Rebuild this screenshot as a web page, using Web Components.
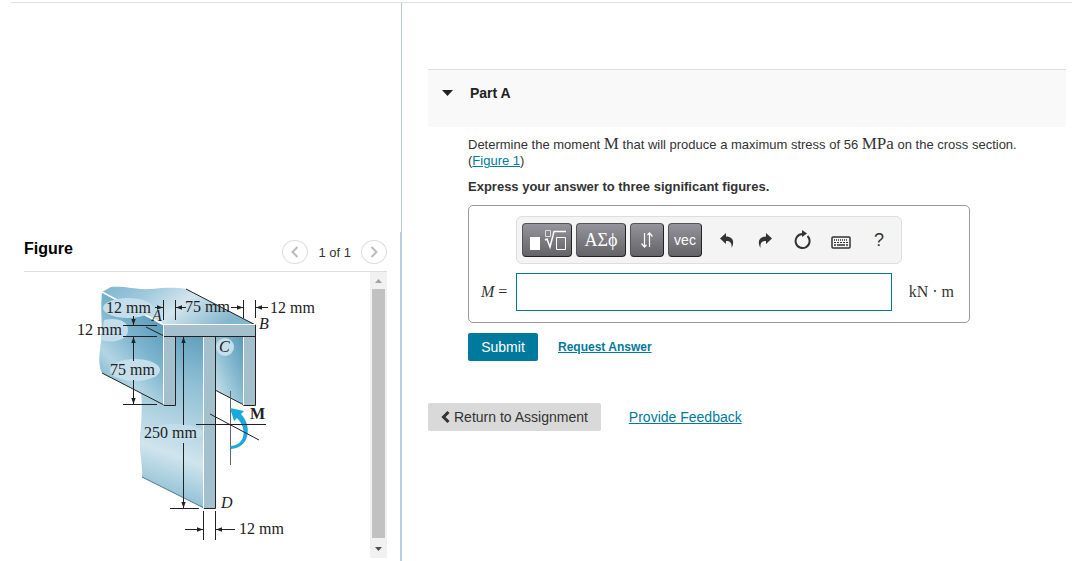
<!DOCTYPE html>
<html lang="en">
<head>
<meta charset="utf-8">
<title>Part A</title>
<style>
  body {
    margin: 0;
    background: #fff;
    color: #333;
    font-family: "Liberation Sans", Arial, sans-serif;
    font-size: 13px;
  }
</style>
</head>
<body>
<assignment-page>
  <figure-panel slot="figure" heading="Figure" count="1 of 1">
    <beam-figure></beam-figure>
  </figure-panel>
  <problem-part heading="Part A">
    <problem-text></problem-text>
    <answer-box></answer-box>
    <answer-actions></answer-actions>
  </problem-part>
  <page-actions></page-actions>
</assignment-page>

<script>
class AssignmentPage extends HTMLElement {
  constructor() {
    super();
    this.attachShadow({ mode: "open" });
  }

  connectedCallback() {
    this.shadowRoot.innerHTML = `
      <style>
        :host { display: block; padding: 2px 0 0 11px; }
        .columns {
          display: grid;
          grid-template-columns: 391px minmax(0, 1fr);
          min-height: calc(100vh - 3px);
          border-top: 1px solid #ddd;
        }
        aside {
          display: flex;
          flex-direction: column;
        }
        .spacer {
          height: 229px;
          border-right: 1px solid #b8c8d8;
        }
        .figure {
          flex: 1;
          padding: 0 13px;
          border-right: 2px solid #b8cce0;
        }
        main { padding: 66px 6px 0 26px; }
      </style>
      <div class="columns">
        <aside>
          <div class="spacer"></div>
          <div class="figure"><slot name="figure"></slot></div>
        </aside>
        <main><slot></slot></main>
      </div>`;
  }
}
customElements.define("assignment-page", AssignmentPage);

class FigurePanel extends HTMLElement {
  constructor() {
    super();
    this.attachShadow({ mode: "open" });
  }

  connectedCallback() {
    this.shadowRoot.innerHTML = `
      <style>
        :host { display: block; }
        header {
          display: flex;
          align-items: center;
          height: 39px;
          border-bottom: 1px solid #ddd;
        }
        h2 {
          flex: 1;
          margin: 0 0 6px;
          font-size: 16px;
          line-height: 18px;
          color: #000;
        }
        nav {
          display: flex;
          align-items: center;
          gap: 10px;
          font-size: 13px;
        }
        nav span { padding-top: 2px; }
        nav button {
          display: grid;
          place-items: center;
          width: 26px;
          height: 24px;
          padding: 0;
          border: 1px solid #ddd;
          border-radius: 50%;
          background: #fff;
        }
        .view { display: flex; }
        .content { flex: 1; min-width: 0; }
        .scroll {
          display: flex;
          flex-direction: column;
          align-items: center;
          width: 17px;
          background: #f1f1f1;
        }
        .scroll svg { display: block; }
        .thumb { flex: 1; width: 13px; background: #c1c1c1; }
        .track { height: 3px; }
      </style>
      <header>
        <h2>${this.getAttribute("heading")}</h2>
        <nav>
          <button aria-label="Previous figure"><svg width="8" height="12" fill="none" stroke="#bbb" stroke-width="2"><path d="M6.500 1 1.500 6l5 5"/></svg></button>
          <span>${this.getAttribute("count")}</span>
          <button aria-label="Next figure"><svg width="8" height="12" fill="none" stroke="#bbb" stroke-width="2"><path d="M1.500 1l5 5-5 5"/></svg></button>
        </nav>
      </header>
      <div class="view">
        <div class="content"><slot></slot></div>
        <div class="scroll">
          <svg width="17" height="17"><path d="M5 11h7L8.500 7z" fill="#a3a3a3"/></svg>
          <div class="thumb"></div>
          <div class="track"></div>
          <svg width="17" height="17"><path d="M5 6h7l-3.500 4z" fill="#505050"/></svg>
        </div>
      </div>`;
  }
}
customElements.define("figure-panel", FigurePanel);

class BeamFigure extends HTMLElement {
  constructor() {
    super();
    this.attachShadow({ mode: "open" });
  }

  connectedCallback() {
    this.shadowRoot.innerHTML = `
      <style>
        :host { display: block; }
        svg { display: block; width: 100%; }
        text { font: 16px "Liberation Serif", "Times New Roman", serif; fill: #222; }
        .point { font-style: italic; }
        .vector { font-weight: bold; }
        .face { fill: #a5c0cd; }
        .halo { fill: #c5deeb; }
        .edge { stroke: #222; fill: none; }
        .light { stroke: #fff; fill: none; }
        .dim { stroke: #222; fill: none; }
        .axis { stroke: #666; }
      </style>
      <svg viewBox="24 272 346 286" role="img" aria-label="Cross section of the beam with moment M">
        <defs>
          <linearGradient id="top" x1="0" x2="1" y1="0" y2=".3">
            <stop offset="0" stop-color="#7db5d0"/>
            <stop offset=".3" stop-color="#9cc8db"/>
            <stop offset=".6" stop-color="#d3e5ee"/>
            <stop offset="1" stop-color="#84b6cc"/>
          </linearGradient>
          <linearGradient id="side" gradientUnits="userSpaceOnUse" x1="160" y1="325" x2="105" y2="375">
            <stop offset="0" stop-color="#5d9ebd"/>
            <stop offset=".4" stop-color="#7db5cf"/>
            <stop offset=".8" stop-color="#b3d5e3"/>
            <stop offset="1" stop-color="#8fc0d6"/>
          </linearGradient>
          <linearGradient id="web" gradientUnits="userSpaceOnUse" x1="204" y1="336" x2="150" y2="490">
            <stop offset="0" stop-color="#5f9fbd"/>
            <stop offset=".3" stop-color="#8fc0d5"/>
            <stop offset=".45" stop-color="#a3cbdc"/>
            <stop offset=".75" stop-color="#d0e4ed"/>
            <stop offset="1" stop-color="#92c1d6"/>
          </linearGradient>
          <linearGradient id="pocket" x1="1" x2="0" y1="0" y2="1">
            <stop offset="0" stop-color="#5598b8"/>
            <stop offset=".5" stop-color="#8dbed3"/>
            <stop offset="1" stop-color="#d5e7ef"/>
          </linearGradient>
          <marker id="tip" viewBox="0 0 6 6" refX="6" refY="3" markerWidth="6" markerHeight="6" orient="auto-start-reverse">
            <path d="M0 .8 6 3 0 5.200z" fill="#222"/>
          </marker>
        </defs>

        <!-- web, left plate, pocket and top plate -->
        <path fill="url(#web)" d="M141 392 175 405V336h29v172l-62-31c1-14-3-22-2-38 1-18 3-28 1-47z"/>
        <path fill="url(#side)" d="M102 292l62 33v80l-62-32c-4-8-3-18-1-31 2-18-1-30 1-50z"/>
        <path fill="url(#pocket)" d="M215 336h29v69l-29-15z"/>
        <path fill="url(#top)" d="M102 292l9-5c16-1 24 3 40 2 14-1 22-2 35 0l70 36h-92z"/>
        <path class="light" d="M102 292l62 33" stroke-width="1.500"/>
        <path class="edge" d="M186 289l69.500 36M102 373l62 32M146 327l18 9M215 390l29 15"/>
        <path stroke="#557786" fill="none" d="M142 477l62 31"/>

        <!-- front faces -->
        <path class="face" d="M164 325h91.500v80h-12v-68.500h-28v172h-12v-172h-28v69H164z"/>
        <path class="light" d="M255 324.500h-91.500v80M203.500 337v171M243.500 337v68"/>
        <path class="edge" d="M164 405.500h11.500v-69M164 336.500h91M255.500 325v80.500h-12M215.500 337v171.500H204"/>

        <!-- label backgrounds -->
        <ellipse class="halo" cx="128" cy="308" rx="25" ry="10"/>
        <path class="halo" d="M104 320c12-3 24 0 24 10 0 9-12 14-27 10z"/>
        <ellipse class="halo" cx="135" cy="370" rx="25" ry="11"/>
        <ellipse class="halo" cx="174" cy="433" rx="29" ry="9" opacity=".8"/>
        <circle class="halo" cx="225" cy="347" r="9"/>

        <!-- dimension lines -->
        <path class="dim" d="M163.500 300v20M175.500 300v20M243.500 300v18M255.500 300v18"/>
        <path class="dim" d="M123 325.500h34M123 336.500h34M123 404.500h34M170 508.500h29"/>
        <path class="dim" d="M203.500 511v29M215.500 511v29"/>
        <g class="dim" marker-end="url(#tip)">
          <path d="M155 307.500h8"/>
          <path d="M186 307.500h-10"/>
          <path d="M231 307.500h12"/>
          <path d="M268 307.500h-12"/>
          <path d="M133.500 316v9"/>
          <path d="M133.500 361v-24"/>
          <path d="M133.500 380v24"/>
          <path d="M183.500 425v-88"/>
          <path d="M183.500 443v65"/>
          <path d="M185 529.500h18"/>
          <path d="M235 529.500h-19"/>
        </g>

        <!-- bending moment -->
        <path class="dim axis" d="M230.500 391v74"/>
        <path fill="#1ba7e0" d="M230 408l14 3-3 3c12 13 8 34-10 35l-1-3c15 0 18-17 7-28l-3 3z"/>
        <path class="dim" d="M196 424.500h70M210 414l49 26"/>

        <text x="106" y="313">12 mm</text>
        <text x="185" y="312">75 mm</text>
        <text x="270" y="313">12 mm</text>
        <text x="77" y="335">12 mm</text>
        <text x="110" y="375">75 mm</text>
        <text x="144" y="438">250 mm</text>
        <text x="239" y="534">12 mm</text>
        <text class="point" x="152" y="321">A</text>
        <text class="point" x="259" y="329">B</text>
        <text class="point" x="219" y="352">C</text>
        <text class="point" x="221" y="508">D</text>
        <text class="vector" x="250" y="419">M</text>
      </svg>`;
  }
}
customElements.define("beam-figure", BeamFigure);

class ProblemPart extends HTMLElement {
  constructor() {
    super();
    this.attachShadow({ mode: "open" });
  }

  connectedCallback() {
    this.shadowRoot.innerHTML = `
      <style>
        :host { display: block; }
        header {
          display: flex;
          gap: 17px;
          height: 57px;
          padding-left: 14px;
          border-top: 1px solid #ddd;
          background: #f9f9f9;
        }
        button {
          align-self: flex-start;
          padding: 0;
          border: 0;
          margin-top: 20px;
          background: none;
          line-height: 0;
        }
        h2 {
          margin: 15px 0 0;
          font-size: 14px;
          line-height: 16px;
          color: #222;
        }
        .body { padding: 9px 0 0 40px; }
      </style>
      <header>
        <button aria-label="Collapse"><svg width="11" height="6"><path d="M0 0h11L5.500 6z" fill="#222"/></svg></button>
        <h2>${this.getAttribute("heading")}</h2>
      </header>
      <div class="body"><slot></slot></div>`;
  }
}
customElements.define("problem-part", ProblemPart);

class ProblemText extends HTMLElement {
  constructor() {
    super();
    this.attachShadow({ mode: "open" });
  }

  connectedCallback() {
    this.shadowRoot.innerHTML = `
      <style>
        :host { display: block; font-size: 13px; line-height: 16px; }
        p { margin: 0 0 10px; }
        .math {
          font-family: "Liberation Serif", "Times New Roman", serif;
          font-size: 17px;
          line-height: 16px;
        }
        a { color: #007a9c; }
      </style>
      <p>Determine the moment <span class="math">M</span> that will produce a maximum stress of 56 <span class="math">MPa</span> on the cross section.<br>(<a href="#figure">Figure 1</a>)</p>
      <p><b>Express your answer to three significant figures.</b></p>`;
  }
}
customElements.define("problem-text", ProblemText);

class AnswerBox extends HTMLElement {
  constructor() {
    super();
    this.attachShadow({ mode: "open" });
  }

  connectedCallback() {
    this.shadowRoot.innerHTML = `
      <style>
        :host {
          display: grid;
          grid-template-columns: 35px minmax(0, 1fr) auto;
          align-items: center;
          row-gap: 9px;
          box-sizing: border-box;
          max-width: 502px;
          padding: 10px 15px 11px 12px;
          border: 1px solid #999;
          border-radius: 5px;
        }
        math-toolbar { grid-column: 2 / -1; justify-self: start; }
        label, .units {
          font-family: "Liberation Serif", "Times New Roman", serif;
          font-size: 16px;
          white-space: nowrap;
        }
        input {
          box-sizing: border-box;
          width: 100%;
          height: 38px;
          border: 1px solid #007a9c;
          background: #fff;
        }
        .units { padding-left: 17px; }
      </style>
      <math-toolbar></math-toolbar>
      <label for="answer"><i>M</i> =</label>
      <input id="answer" type="text">
      <span class="units">kN · m</span>`;
  }
}
customElements.define("answer-box", AnswerBox);

class MathToolbar extends HTMLElement {
  constructor() {
    super();
    this.attachShadow({ mode: "open" });
  }

  connectedCallback() {
    this.shadowRoot.innerHTML = `
      <style>
        :host {
          display: flex;
          gap: 4px;
          padding: 6px 3px 6px 5px;
          border: 1px solid #ddd;
          border-radius: 6px;
          background: #f4f4f4;
        }
        button {
          display: grid;
          place-items: center;
          height: 34px;
          padding: 0;
          font: 14px "Liberation Sans", Arial, sans-serif;
        }
        .key {
          width: 34px;
          border: 1px solid #555;
          border-right-color: #222;
          border-bottom-color: #222;
          border-radius: 4px;
          background: linear-gradient(#95949c, #646367);
          color: #fff;
        }
        .wide { width: 50px; }
        .greek { font: 18px "Liberation Serif", serif; }
        .tools { display: flex; padding-left: 2px; }
        .tools button {
          width: 38px;
          border: 0;
          background: none;
          color: #333;
        }
        .tools .help { font-size: 18px; }
      </style>
      <button class="key wide" aria-label="Templates">
        <svg width="38" height="24" fill="none" stroke="#fff">
          <path d="M2 9h10v13H2z" fill="#fff" stroke="none"/>
          <path d="M17.500 2.500h5v6h-5z" stroke="#ddd"/>
          <path d="M17 12l2-1 3 8 4-15.500h13" stroke-width="1.500"/>
          <path d="M28.500 9.500h9v12h-9z"/>
        </svg>
      </button>
      <button class="key wide greek">ΑΣϕ</button>
      <button class="key" aria-label="Arrows">
        <svg width="14" height="18" fill="none" stroke="#fff" stroke-width="1.200">
          <path d="M4.500 2v14M1.500 12.500l3 3.500 2-2M9.500 16V2M7.500 4l2-2 3 3.500"/>
        </svg>
      </button>
      <button class="key">vec</button>
      <div class="tools">
        <button aria-label="Undo"><svg width="14" height="15" fill="#333"><path d="M0 5.500 6 0v3.500c7 0 9 5.500 5.500 11.500.5-5-1-7-5.500-7V11z"/></svg></button>
        <button aria-label="Redo"><svg width="14" height="15" fill="#333"><path d="M14 5.500 8 0v3.500c-7 0-9 5.500-5.500 11.500-.5-5 1-7 5.500-7V11z"/></svg></button>
        <button aria-label="Reset"><svg width="18" height="20" fill="none" stroke="#333" stroke-width="2"><path d="M13.500 6A7 7 0 1 1 8.500 4"/><path d="M8 0v7l5-3.500z" fill="#333" stroke="none"/></svg></button>
        <button aria-label="Keyboard"><svg width="20" height="17" fill="none" stroke="#333"><rect x="1" y="5" width="18" height="11" rx="1" stroke-width="1.500"/><path d="M3 8h14" stroke-width="1.500" stroke-dasharray="1 1"/><path d="M3 10.500h14" stroke-dasharray="2 1"/><path d="M3 13h2M6 13h8M15 13h2" stroke-width="1.500"/></svg></button>
        <button class="help" aria-label="Help">?</button>
      </div>`;
  }
}
customElements.define("math-toolbar", MathToolbar);

class AnswerActions extends HTMLElement {
  constructor() {
    super();
    this.attachShadow({ mode: "open" });
  }

  connectedCallback() {
    this.shadowRoot.innerHTML = `
      <style>
        :host {
          display: flex;
          align-items: center;
          gap: 20px;
          margin-top: 10px;
        }
        button {
          width: 70px;
          height: 28px;
          padding: 0;
          border: 0;
          border-radius: 2px;
          background: #007a9c;
          color: #fff;
          font: 14px "Liberation Sans", Arial, sans-serif;
        }
        a { color: #007a9c; font-size: 12px; font-weight: bold; }
      </style>
      <button type="submit">Submit</button>
      <a href="#answer">Request Answer</a>`;
  }
}
customElements.define("answer-actions", AnswerActions);

class PageActions extends HTMLElement {
  constructor() {
    super();
    this.attachShadow({ mode: "open" });
  }

  connectedCallback() {
    this.shadowRoot.innerHTML = `
      <style>
        :host {
          display: flex;
          align-items: center;
          gap: 28px;
          margin-top: 42px;
          font-size: 14px;
        }
        button {
          display: flex;
          align-items: center;
          gap: 4px;
          height: 28px;
          padding: 0 13px;
          border: 0;
          border-radius: 2px;
          background: #d9d9d9;
          color: #333;
          font: 14px "Liberation Sans", Arial, sans-serif;
        }
        a { color: #007a9c; }
      </style>
      <button><svg width="9" height="12" fill="none" stroke="#333" stroke-width="3"><path d="M7.500 1 2.500 6l5 5"/></svg>Return to Assignment</button>
      <a href="#feedback">Provide Feedback</a>`;
  }
}
customElements.define("page-actions", PageActions);
</script>
</body>
</html>
